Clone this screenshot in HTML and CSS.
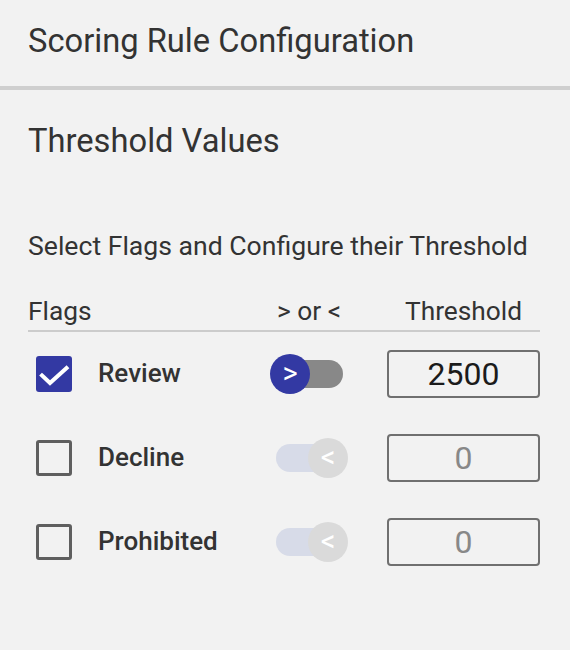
FILE: index.html
```html
<!DOCTYPE html>
<html>
<head>
<meta charset="utf-8">
<link rel="stylesheet" href="styles.css">
</head>
<body>
<header class="header">
  <h1 class="title">Scoring Rule Configuration</h1>
</header>
<section class="panel">
  <h2 class="subtitle">Threshold Values</h2>
  <p class="hint">Select Flags and Configure their Threshold</p>
  <div class="table">
    <div class="thead">
      <span class="th th-flag">Flags</span>
      <span class="th th-center">&gt; or &lt;</span>
      <span class="th th-gap"></span>
      <span class="th th-center">Threshold</span>
    </div>
    <div class="row">
      <div class="flag">
        <span class="check checked">
          <svg viewBox="0 0 36 36" width="36" height="36"><path d="M6 19.5 L14 27 L30.5 12" fill="none" stroke="#fff" stroke-width="4" stroke-linecap="square"/></svg>
        </span>
        <span class="label">Review</span>
      </div>
      <div class="toggle on"><span class="track"></span><span class="thumb">&gt;</span></div>
      <span></span>
      <div class="input">2500</div>
    </div>
    <div class="row">
      <div class="flag">
        <span class="check"></span>
        <span class="label">Decline</span>
      </div>
      <div class="toggle off"><span class="track"></span><span class="thumb">&lt;</span></div>
      <span></span>
      <div class="input disabled">0</div>
    </div>
    <div class="row">
      <div class="flag">
        <span class="check"></span>
        <span class="label">Prohibited</span>
      </div>
      <div class="toggle off"><span class="track"></span><span class="thumb">&lt;</span></div>
      <span></span>
      <div class="input disabled">0</div>
    </div>
  </div>
</section>
</body>
</html>
```
FILE: styles.css
```css
* { box-sizing: border-box; }
html, body {
  margin: 0;
  padding: 0;
  background: #f2f2f2;
  font-family: Roboto, "Noto Sans", sans-serif;
  color: #333333;
}
.header {
  height: 90px;
  padding: 25px 0 0 28px;
  border-bottom: 4px solid #cfcfcf;
}
.title {
  margin: 0;
  font-size: 32.7px;
  line-height: 32px;
  font-weight: 400;
}
.panel {
  padding: 35px 30px 0 28px;
}
.subtitle {
  margin: 0;
  font-size: 32.7px;
  line-height: 32px;
  font-weight: 400;
}
.hint {
  margin: 76px 0 0 0;
  font-size: 26.6px;
  line-height: 26px;
}
.table {
  margin-top: 39px;
}
.thead, .row {
  display: grid;
  grid-template-columns: 242px 78px 39px 153px;
  align-items: center;
}
.thead {
  padding-bottom: 6px;
  border-bottom: 2px solid #cccccc;
}
.th {
  font-size: 26.3px;
  line-height: 26px;
}
.th-center {
  text-align: center;
}
.row {
  height: 84px;
}
.flag {
  display: flex;
  align-items: center;
  padding-left: 8px;
  gap: 26px;
}
.check {
  width: 36px;
  height: 36px;
  border: 3px solid #5f5f5f;
  border-radius: 3px;
  display: block;
}
.check.checked {
  border: none;
  background: #3339a3;
}
.check svg { display: block; }
.label {
  font-size: 26px;
  line-height: 30px;
  padding-bottom: 2px;
  font-weight: 500;
  color: #333333;
}
.toggle {
  position: relative;
  height: 40px;
  display: flex;
  align-items: center;
}
.track {
  display: block;
  height: 28px;
  margin: 0 5px 0 6px;
  flex: 1;
  border-radius: 14px;
}
.toggle.on .track { background: #888888; }
.toggle.off .track { background: #d7dbe8; }
.thumb {
  position: absolute;
  top: 0;
  width: 40px;
  height: 40px;
  border-radius: 50%;
  display: flex;
  align-items: center;
  justify-content: center;
  color: #ffffff;
  font-size: 29px;
  font-weight: 400;
  line-height: 1;
  padding-bottom: 2px;
}
.toggle.on .thumb { left: 0; background: #3339a3; }
.toggle.off .thumb { right: 0; background: #dadada; }
.input {
  height: 48px;
  border: 2px solid #707070;
  border-radius: 4px;
  display: flex;
  align-items: center;
  justify-content: center;
  font-size: 32px;
  color: #1b1b1b;
}
.input.disabled {
  color: #888888;
}
```
